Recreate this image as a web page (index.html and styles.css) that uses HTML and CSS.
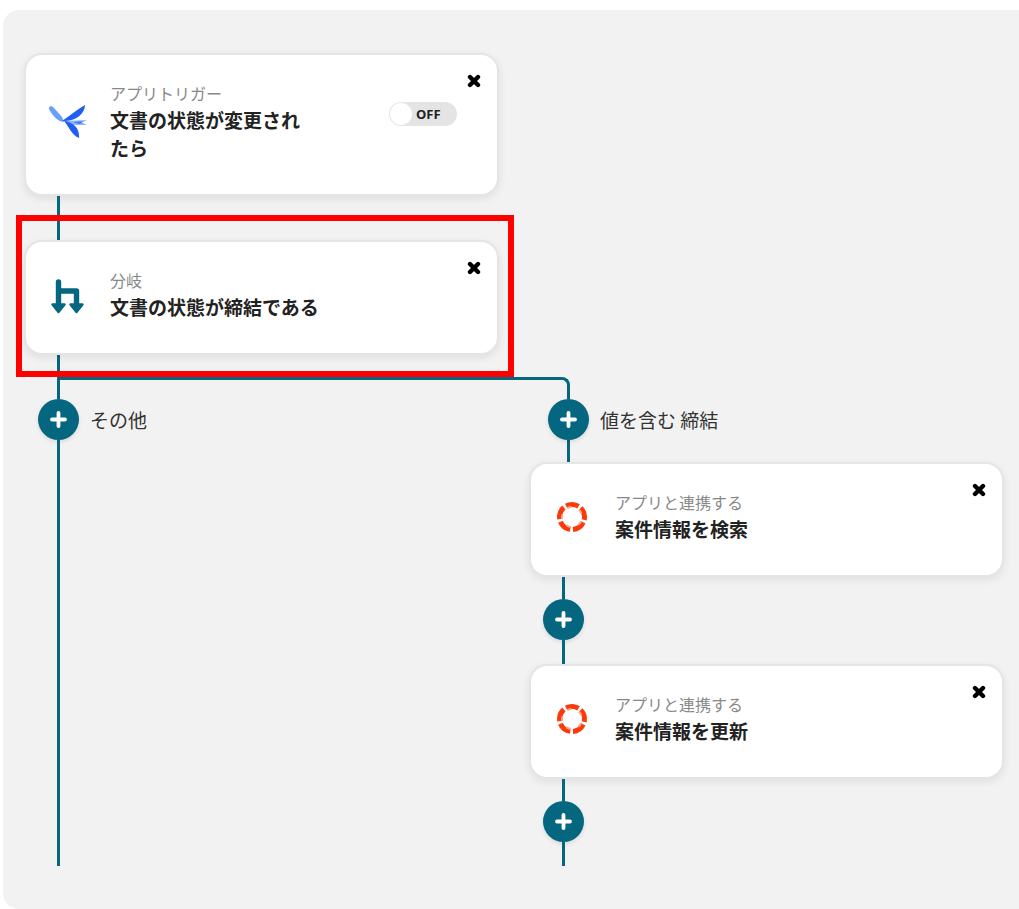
FILE: index.html
```html
<!DOCTYPE html>
<html lang="ja">
  <head>
    <meta charset="UTF-8" />
    <meta name="viewport" content="width=device-width, initial-scale=1.0" />
    <title>ワークフロー</title>
    <link rel="stylesheet" href="styles.css">
  </head>
  <body>
    <!-- 共通アイコン -->
    <svg class="sprite" aria-hidden="true">
      <symbol id="icon-close" viewBox="0 0 14 14">
        <path d="M3 3 11 11M11 3 3 11" stroke="#000" stroke-width="4.4" stroke-linecap="round" />
      </symbol>
      <symbol id="icon-plus" viewBox="0 0 17 17">
        <path d="M8.5 2v13M2 8.5h13" stroke="#fff" stroke-width="3.8" stroke-linecap="round" />
      </symbol>
      <symbol id="icon-ring" viewBox="0 0 40 40">
        <g fill="none">
          <circle cx="19" cy="18" r="12.5" stroke="#fb3a0c" stroke-width="5" pathLength="100" stroke-dasharray="16.5 3.5" transform="rotate(98 19 18)" />
          <circle cx="19" cy="18" r="10" stroke="#ffa58c" stroke-width="2" pathLength="100" stroke-dasharray="7 13" transform="rotate(98 19 18)" />
        </g>
      </symbol>
    </svg>

    <main class="canvas">
      <div class="trunk">
        <section class="card card-trigger">
          <svg class="card-icon" viewBox="0 0 40 40" aria-hidden="true">
            <path d="M1 5C0 2 4 1 6 4L14 13 16 18C10 18 4 11 1 5Z" fill="#67a0ff" />
            <path d="M14 17C22 12 28 6 37 1C37 10 27 18 14 17Z" fill="#1f5df5" />
            <path d="M16 17 39 16 34 18.5 39 21 26 21Z" fill="#8db4ff" />
            <path d="M25 18 35 17.5 32 20Z" fill="#3b74f8" />
            <path d="M16 17C25 18 32 24 31 34C24 31 21 23 16 17Z" fill="#1f5df5" />
          </svg>
          <div class="card-text">
            <p class="card-label">アプリトリガー</p>
            <h2 class="card-title">文書の状態が変更されたら</h2>
          </div>
          <label class="toggle">
            <input type="checkbox" class="toggle-knob">
            <span>OFF</span>
          </label>
          <button type="button" class="close" aria-label="削除"><svg><use href="#icon-close" /></svg></button>
        </section>

        <div class="line line-trunk"></div>

        <div class="highlight">
          <section class="card">
            <svg class="card-icon" viewBox="0 0 40 40" aria-hidden="true">
              <g fill="#056680" stroke="#056680" stroke-linejoin="round">
                <path d="M10.5 5V28M10.5 14H28.5V28" fill="none" stroke-width="5.4" stroke-linecap="round" />
                <path d="M4.5 27.5H16.5L10.5 35ZM22.500 27.5H34.5L28.5 35Z" stroke-width="2.4" />
              </g>
            </svg>
            <div class="card-text">
              <p class="card-label">分岐</p>
              <h2 class="card-title">文書の状態が締結である</h2>
            </div>
            <button type="button" class="close" aria-label="削除"><svg><use href="#icon-close" /></svg></button>
          </section>
        </div>

        <div class="line"></div>
      </div>

      <!-- 分岐線 -->
      <div class="fork"></div>

      <div class="branches">
        <div class="branch">
          <div class="branch-head">
            <button type="button" class="add" aria-label="追加"><svg><use href="#icon-plus" /></svg></button>
            <span>その他</span>
          </div>
          <div class="line line-fill"></div>
        </div>

        <div class="branch">
          <div class="branch-start">
            <div class="branch-head">
              <button type="button" class="add" aria-label="追加"><svg><use href="#icon-plus" /></svg></button>
              <span>値を含む 締結</span>
            </div>
            <div class="line"></div>
          </div>

          <section class="card">
            <svg class="card-icon" aria-hidden="true"><use href="#icon-ring" /></svg>
            <div class="card-text">
              <p class="card-label">アプリと連携する</p>
              <h2 class="card-title">案件情報を検索</h2>
            </div>
            <button type="button" class="close" aria-label="削除"><svg><use href="#icon-close" /></svg></button>
          </section>
          <div class="line"></div>
          <button type="button" class="add" aria-label="追加"><svg><use href="#icon-plus" /></svg></button>
          <div class="line line-add"></div>

          <section class="card">
            <svg class="card-icon" aria-hidden="true"><use href="#icon-ring" /></svg>
            <div class="card-text">
              <p class="card-label">アプリと連携する</p>
              <h2 class="card-title">案件情報を更新</h2>
            </div>
            <button type="button" class="close" aria-label="削除"><svg><use href="#icon-close" /></svg></button>
          </section>
          <div class="line"></div>
          <button type="button" class="add" aria-label="追加"><svg><use href="#icon-plus" /></svg></button>
          <div class="line line-add"></div>
        </div>
      </div>
    </main>
  </body>
</html>
```

FILE: styles.css
```css
* {
  box-sizing: border-box;
}

body {
  margin: 0;
  background: #fff;
  color: #333;
  font-family: "Noto Sans CJK JP", sans-serif;
}

p,
h2 {
  margin: 0;
}

button {
  padding: 0;
  border: none;
  cursor: pointer;
}

.sprite {
  display: none;
}

/* キャンバス */
.canvas {
  margin: 10px 0 0 3px;
  padding: 43px 15px 43px 21px;
  background: #f2f2f2;
  border-radius: 16px 0 0 16px;
}

.trunk {
  width: calc(50% - 15px);
}

/* カード */
.card {
  display: flex;
  align-items: center;
  padding: 19px 16px 21px 22px;
  background: #fff;
  border: 2px solid #e5e5e5;
  border-radius: 18px;
  box-shadow: 0 3px 8px rgba(0, 0, 0, 0.08);
}

.card-icon {
  flex: none;
  width: 40px;
  height: 40px;
  margin-right: 22px;
}

.card-text {
  flex: 1;
  padding: 7px 0 11px;
}

.card-trigger .card-text {
  flex: 0 1 200px;
}

.card-label {
  font-size: 16px;
  line-height: 25px;
  color: #888;
}

.card-title {
  font-size: 19px;
  line-height: 28px;
  font-weight: 700;
  color: #222;
}

.close {
  flex: none;
  align-self: flex-start;
  width: 14px;
  height: 14px;
  background: none;
}

.close svg {
  display: block;
  width: 14px;
  height: 14px;
}

/* ON/OFF スイッチ */
.toggle {
  display: flex;
  align-self: flex-start;
  align-items: center;
  gap: 4px;
  width: 68px;
  height: 24px;
  margin: 28px 10px 0 auto;
  padding: 1px;
  background: #e4e4e4;
  border-radius: 12px;
  font: bold 13px "Open Sans", sans-serif;
  color: #222;
  cursor: pointer;
}

.toggle-knob {
  appearance: none;
  width: 22px;
  height: 22px;
  margin: 0;
  background: #fff;
  border-radius: 50%;
}

/* 接続線 */
.line {
  width: 3px;
  height: 22px;
  margin-left: 33px;
  background: #056680;
}

.line-trunk {
  height: 44px;
}

.line-add {
  height: 24px;
}

.line-fill {
  flex: 1;
}

.fork {
  width: calc(50% + 23px);
  height: 22px;
  margin-left: 33px;
  border: 3px solid #056680;
  border-bottom: none;
  border-top-right-radius: 8px;
}

/* 強調枠 */
.highlight {
  position: relative;
}

.highlight::after {
  content: "";
  position: absolute;
  inset: -25px -15px -22px -8px;
  border: 6px solid #f00;
  pointer-events: none;
}

/* 分岐 */
.branches {
  display: grid;
  grid-template-columns: 1fr 1fr;
  gap: 30px;
}

.branch {
  display: flex;
  flex-direction: column;
}

.branch-start {
  padding-left: 5px;
}

.branch-head {
  display: flex;
  align-items: center;
  gap: 11px;
  font-size: 19px;
  line-height: 28px;
}

.add {
  display: grid;
  place-items: center;
  flex: none;
  width: 41px;
  height: 41px;
  margin-left: 14px;
  background: #056680;
  border-radius: 50%;
  box-shadow: 0 2px 4px rgba(0, 0, 0, 0.1);
}

.add svg {
  width: 17px;
  height: 17px;
}
```
